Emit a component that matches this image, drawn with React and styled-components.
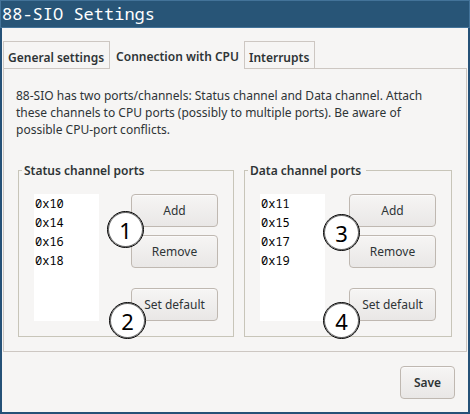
import React from "react";
import styled, { createGlobalStyle } from "styled-components";

const GlobalStyle = createGlobalStyle`
  *, *::before, *::after { box-sizing: border-box; }
  body {
    margin: 0;
    background: #f6f5f4;
    color: #2e3436;
    font: 12px/17px "Noto Sans", sans-serif;
  }
`;

const Window = styled.main`
  display: flex;
  flex-direction: column;
  min-height: 100vh;
  background: #f6f5f4;
  border: 2px solid #255177;
  border-top: 0;
`;

const TitleBar = styled.h1`
  margin: 0 -2px;
  padding: 0 1px;
  border: 1px solid #437399;
  background: #285577;
  color: #fff;
  font: 400 17px/26px "Noto Sans Mono", "DejaVu Sans Mono", monospace;
`;

const TabBar = styled.div`
  display: flex;
  align-items: flex-end;
  margin: 12px 1px 0;
  position: relative;
`;

const Tab = styled.button`
  height: ${(p) => (p.$active ? 29 : 28)}px;
  margin-bottom: -1px;
  padding: ${(p) => (p.$active ? "3px 5px 0 6px" : "4px 5px 0 4px")};
  border: 1px solid #cdc7c2;
  border-width: ${(p) => (p.$active ? "0" : "1px")};
  background: #f6f5f4;
  color: #2e3436;
  font: 600 12px/17px "Noto Sans", sans-serif;
  white-space: nowrap;
`;

const Panel = styled.section`
  margin: 0 1px;
  padding: 18px 14px 14px;
  border: 1px solid #cdc7c2;
`;

const Description = styled.p`
  max-width: 420px;
  margin: 0 -2px 24px;
`;

const Groups = styled.div`
  display: grid;
  grid-template-columns: 216fr 208fr;
  gap: 10px;
`;

const Group = styled.fieldset`
  min-width: 0;
  margin: 0;
  padding: 15px 15px;
  border: 1px solid #c8c5b9;
`;

const GroupTitle = styled.legend`
  margin-left: -12px;
  padding: 0 5px 0 2px;
  font-weight: 600;
`;

const GroupBody = styled.div`
  display: flex;
  justify-content: space-between;
`;

const PortList = styled.select`
  width: 65px;
  height: 127px;
  padding: 1px 0 0;
  border: 0;
  border-radius: 0;
  outline: 0;
  overflow: hidden;
  background: #fff;
  color: #000;
  font: 12px/19px "Noto Sans Mono", "DejaVu Sans Mono", monospace;
`;

const Port = styled.option`
  min-height: 19px;
  padding: 0 1px;
  line-height: 19px;
`;

const Actions = styled.div`
  position: relative;
  display: flex;
  flex-direction: column;
  gap: 8px;
  width: 87px;
`;

const Button = styled.button`
  height: 33px;
  min-width: 55px;
  padding: 0 12px;
  border: 1px solid #bfb8b1;
  border-radius: 4px;
  background: linear-gradient(#f6f5f4, #e9e7e6);
  box-shadow: inset 0 1px #fbfafa;
  color: #2e3436;
  font: ${(p) => (p.$strong ? 600 : 400)} 12px/17px "Noto Sans", sans-serif;
  white-space: nowrap;
  margin-top: ${(p) => (p.$apart ? 12 : 0)}px;
`;

const Badge = styled.span`
  position: absolute;
  left: ${(p) => p.$x}px;
  top: ${(p) => p.$y}px;
  display: flex;
  align-items: center;
  justify-content: center;
  width: 37px;
  height: 37px;
  border: 1px solid #000;
  box-shadow: inset 0 0 0 1px rgba(0, 0, 0, 0.6);
  border-radius: 50%;
  background: #fff;
  color: #000;
  font-size: 22px;
  line-height: 30px;
`;

const Footer = styled.footer`
  display: flex;
  justify-content: flex-end;
  padding: 14px 13px 12px;
`;

const groups = [
  {
    title: "Status channel ports",
    ports: ["0x10", "0x14", "0x16", "0x18"],
    badges: [
      { label: "1", x: -24, y: 17 },
      { label: "2", x: -22, y: 108 },
    ],
  },
  {
    title: "Data channel ports",
    ports: ["0x11", "0x15", "0x17", "0x19"],
    badges: [
      { label: "3", x: -26, y: 20 },
      { label: "4", x: -26, y: 108 },
    ],
  },
];

export default function App() {
  return (
    <>
      <GlobalStyle />
      <Window>
        <TitleBar>88-SIO Settings</TitleBar>
        <TabBar role="tablist">
          <Tab role="tab" aria-selected="false">General settings</Tab>
          <Tab role="tab" aria-selected="true" $active>Connection with CPU</Tab>
          <Tab role="tab" aria-selected="false">Interrupts</Tab>
        </TabBar>
        <Panel role="tabpanel">
          <Description>
            88-SIO has two ports/channels: Status channel and Data channel. Attach
            these channels to CPU ports (possibly to multiple ports). Be aware of
            possible CPU-port conflicts.
          </Description>
          <Groups>
            {groups.map((group) => (
              <Group key={group.title}>
                <GroupTitle>{group.title}</GroupTitle>
                <GroupBody>
                  <PortList multiple size={6} aria-label={group.title}>
                    {group.ports.map((port) => (
                      <Port key={port}>{port}</Port>
                    ))}
                  </PortList>
                  <Actions>
                    <Button>Add</Button>
                    <Button>Remove</Button>
                    <Button $apart>Set default</Button>
                    {group.badges.map((b) => (
                      <Badge key={b.label} $x={b.x} $y={b.y}>{b.label}</Badge>
                    ))}
                  </Actions>
                </GroupBody>
              </Group>
            ))}
          </Groups>
        </Panel>
        <Footer>
          <Button $strong>Save</Button>
        </Footer>
      </Window>
    </>
  );
}
